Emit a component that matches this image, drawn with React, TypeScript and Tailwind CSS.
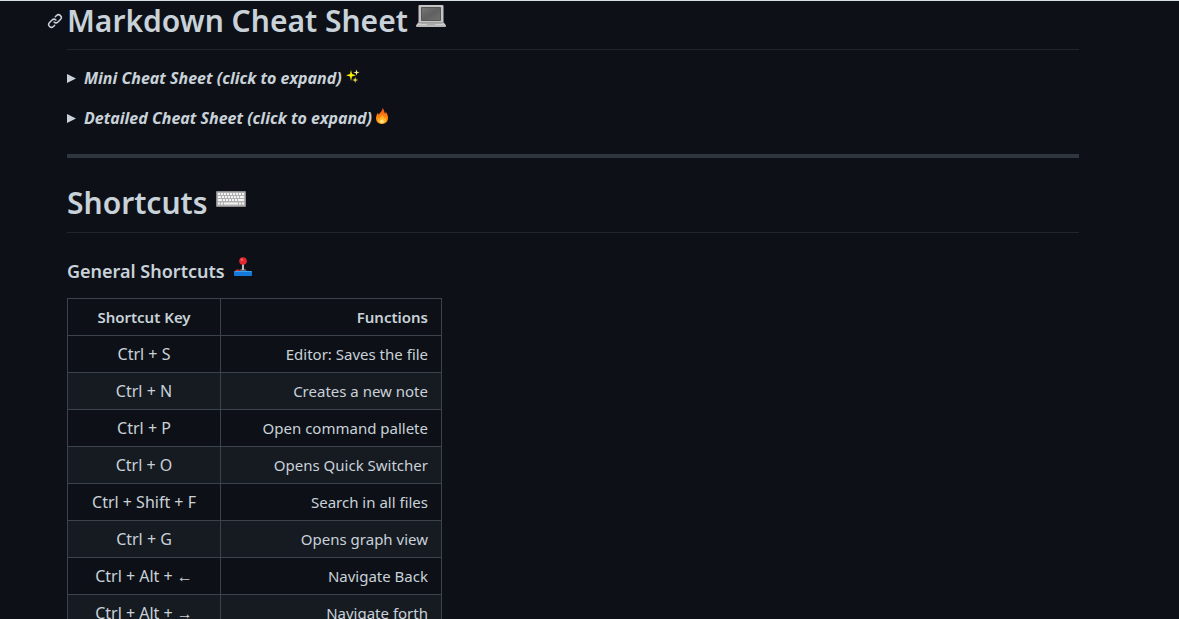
import React from 'react';

const generalShortcuts = [
  { keys: 'Ctrl + S', action: 'Editor: Saves the file' },
  { keys: 'Ctrl + N', action: 'Creates a new note' },
  { keys: 'Ctrl + P', action: 'Open command pallete' },
  { keys: 'Ctrl + O', action: 'Opens Quick Switcher' },
  { keys: 'Ctrl + Shift + F', action: 'Search in all files' },
  { keys: 'Ctrl + G', action: 'Opens graph view' },
  { keys: 'Ctrl + Alt + ←', action: 'Navigate Back' },
  { keys: 'Ctrl + Alt + →', action: 'Navigate forth' },
];

function LinkIcon() {
  return (
    <svg viewBox="0 0 16 16" className="size-4" fill="currentColor" aria-hidden="true">
      <path d="m7.775 3.275 1.25-1.25a3.5 3.5 0 1 1 4.95 4.95l-2.5 2.5a3.5 3.5 0 0 1-4.95 0 .751.751 0 0 1 .018-1.042.751.751 0 0 1 1.042-.018 1.998 1.998 0 0 0 2.83 0l2.5-2.5a2.002 2.002 0 0 0-2.83-2.83l-1.25 1.25a.751.751 0 0 1-1.042-.018.751.751 0 0 1-.018-1.042Zm-4.69 9.64a1.998 1.998 0 0 0 2.83 0l1.25-1.25a.751.751 0 0 1 1.042.018.751.751 0 0 1 .018 1.042l-1.25 1.25a3.5 3.5 0 1 1-4.95-4.95l2.5-2.5a3.5 3.5 0 0 1 4.95 0 .751.751 0 0 1-.018 1.042.751.751 0 0 1-1.042.018 1.998 1.998 0 0 0-2.83 0l-2.5 2.5a1.998 1.998 0 0 0 0 2.83Z" />
    </svg>
  );
}

function LaptopIcon() {
  return (
    <svg viewBox="0 0 30 22" className="h-[22px] w-[30px]" aria-hidden="true">
      <defs>
        <linearGradient id="laptop-screen" x1="0" y1="0" x2="1" y2="1">
          <stop offset="0" stopColor="#777" />
          <stop offset="0.5" stopColor="#606060" />
          <stop offset="1" stopColor="#707070" />
        </linearGradient>
        <linearGradient id="laptop-base" x1="0" y1="0" x2="0" y2="1">
          <stop offset="0" stopColor="#999" />
          <stop offset="1" stopColor="#e3e3e3" />
        </linearGradient>
      </defs>
      <path d="M3.5 0h23a1 1 0 0 1 1 1v16h-25V1a1 1 0 0 1 1-1Z" fill="#c4c4c4" />
      <path d="M5.500 2.500h19v13h-19Z" fill="url(#laptop-screen)" stroke="#555" />
      <path d="M2.500 17h25l2.500 3.500H0Z" fill="url(#laptop-base)" />
      <path d="M5 18h20" stroke="#999" />
      <path d="M11 19h8l.5 1.500h-9Z" fill="#aaa" />
      <path d="M0 20h30v1q0 1-1 1H1q-1 0-1-1Z" fill="#b8b8b8" />
    </svg>
  );
}

function KeyboardIcon() {
  return (
    <svg viewBox="0 0 30 16" className="h-4 w-[30px]" aria-hidden="true">
      <rect width="30" height="16" rx="1" fill="#8a8a8a" />
      <rect x="1" y="1" width="28" height="14" fill="#b0b0b0" />
      <path d="M2 3h26" stroke="#f4f4f4" strokeWidth="2" strokeDasharray="2 1" />
      <path d="M2 6h26" stroke="#f4f4f4" strokeWidth="2" strokeDasharray="3 1 2 1 2 1 2 1 2 1 2 1 2 1 4" />
      <path d="M2 9h26" stroke="#f4f4f4" strokeWidth="2" strokeDasharray="4 1 2 1 2 1 2 1 2 1 2 1 6" />
      <path d="M2 12.500h26" stroke="#f4f4f4" strokeWidth="2" strokeDasharray="2 1 2 1 14 1 2 1 2" />
    </svg>
  );
}

function SparklesIcon() {
  return (
    <svg viewBox="0 0 14 14" className="size-3.5" aria-hidden="true">
      <path d="M5 1 6 5l4 1.200-4 1.200L5 12 4 7.400 0 6.200 4 5Z" fill="#fff200" />
      <path d="m10.500.5.7 2.300 2.300.7-2.300.7-.7 2.300-.7-2.300-2.300-.7 2.300-.7Z" fill="#ffe88a" />
      <path d="m9.200 8 .7 2.200 2.300.8-2.300.7-.7 2.300-.7-2.300-2.300-.7 2.300-.8Z" fill="#f8d94c" />
    </svg>
  );
}

function FireIcon() {
  return (
    <svg viewBox="0 0 12 16" className="h-4 w-3" aria-hidden="true">
      <defs>
        <linearGradient id="flame" x1="0" y1="0" x2="0" y2="1">
          <stop offset="0" stopColor="#f64b16" />
          <stop offset="0.6" stopColor="#ff8a0d" />
          <stop offset="1" stopColor="#f7931e" />
        </linearGradient>
      </defs>
      <path d="M6.500 0C8.500 2 8 4 9 5.500c.8-.4.8-1.200.6-2C11.500 6 12 8 12 10c0 3.500-2.500 6-6 6s-6-2.500-6-5.500C0 8 1 6 2 4.500c0 1 .2 1.700.8 2C4 4.500 6.500 3 6.500 0Z" fill="url(#flame)" />
      <path d="M6.300 6.500c.2 2 2 3 2.200 4.500.5-.3.700-.9.7-1.500.7 1 1 1.700 1 2.500 0 2-1.700 3.300-4.200 3.300S1.800 14 1.800 12.300c0-1 .4-1.800 1-2.300 0 .8.3 1.200.7 1.500C4 9.500 6 8.500 6.300 6.500Z" fill="#ffb52a" />
      <path d="M6.300 11c.4 1 1.500 1.500 1.500 2.600 0 1-.8 1.600-1.800 1.600s-2-.6-2-1.600c0-1.200 1.800-1.400 2.300-2.600Z" fill="#ffe68a" />
    </svg>
  );
}

function JoystickIcon() {
  return (
    <svg viewBox="0 0 20 19" className="h-[19px] w-5" aria-hidden="true">
      <path d="M6 14.500c.5-2 2-3 4-3s3.500 1 4 3Z" fill="#555d66" />
      <path d="M9 6h2v7H9Z" fill="#b9bdc2" />
      <circle cx="10" cy="4" r="3.800" fill="#e3262f" />
      <circle cx="8.800" cy="2.800" r="1.300" fill="#f65c5c" />
      <rect x="2.500" y="12.500" width="4" height="2.500" rx="1" fill="#e0242d" />
      <rect x="1" y="14" width="18" height="5" rx="1" fill="#1479d8" />
      <path d="M1.500 14.500h17" stroke="#3ba0f3" />
    </svg>
  );
}

function Collapsible({ title, icon, children }: { title: string; icon: React.ReactNode; children: React.ReactNode }) {
  return (
    <details className="group mb-4">
      <summary className="flex cursor-pointer list-none items-center text-base">
        <svg viewBox="0 0 10 10" className="mr-2 size-[9px] group-open:rotate-90" fill="currentColor" aria-hidden="true">
          <path d="M0 0v10l10-5Z" />
        </svg>
        <strong className="font-bold italic">{title}</strong>
        <span className="mb-1 ml-1">{icon}</span>
      </summary>
      <div className="mt-2 hidden group-open:block">{children}</div>
    </details>
  );
}

export default function App() {
  return (
    <div className="min-h-screen border-t border-[#d5dfe3] bg-[#0d1117] pr-[100px] pl-[67px] font-['Noto_Sans','Open_Sans',sans-serif] text-[15px] leading-6 text-[#c9d1d9]">
      <article>
        <h1 className="mb-4 flex items-center border-b border-[#21262d] pb-2 text-3xl leading-10 font-semibold">
          <a href="#markdown-cheat-sheet" aria-label="Permalink: Markdown Cheat Sheet" className="-ml-5 w-5">
            <LinkIcon />
          </a>
          Markdown Cheat Sheet
          <span className="mb-2.5 ml-2"><LaptopIcon /></span>
        </h1>

        <Collapsible title="Mini Cheat Sheet (click to expand)" icon={<SparklesIcon />}>
          <p>Headings, bold, italic, links and lists.</p>
        </Collapsible>
        <Collapsible title="Detailed Cheat Sheet (click to expand)" icon={<FireIcon />}>
          <p>Tables, code blocks, footnotes and task lists.</p>
        </Collapsible>

        <hr className="my-6 h-1 border-0 bg-[#30363d]" />

        <h1 className="mb-6 flex items-center border-b border-[#21262d] pb-2 text-3xl leading-[42px] font-semibold">
          Shortcuts
          <span className="mb-2 ml-2"><KeyboardIcon /></span>
        </h1>

        <h3 className="mb-3.5 flex items-center text-lg leading-6 font-semibold">
          General Shortcuts
          <span className="mb-2 ml-2"><JoystickIcon /></span>
        </h3>

        <table className="mb-4 w-[375px] border-collapse">
          <thead>
            <tr>
              <th className="w-[153px] border border-[#3b434b] px-[13px] py-1.5 text-center font-semibold">Shortcut Key</th>
              <th className="border border-[#3b434b] px-[13px] py-1.5 text-right font-semibold">Functions</th>
            </tr>
          </thead>
          <tbody>
            {generalShortcuts.map((s) => (
              <tr key={s.keys} className="even:bg-[#161b22]">
                <td className="border border-[#3b434b] px-[13px] py-1.5 text-center text-base leading-6">{s.keys}</td>
                <td className="border border-[#3b434b] px-[13px] py-1.5 text-right">{s.action}</td>
              </tr>
            ))}
          </tbody>
        </table>
      </article>
    </div>
  );
}
